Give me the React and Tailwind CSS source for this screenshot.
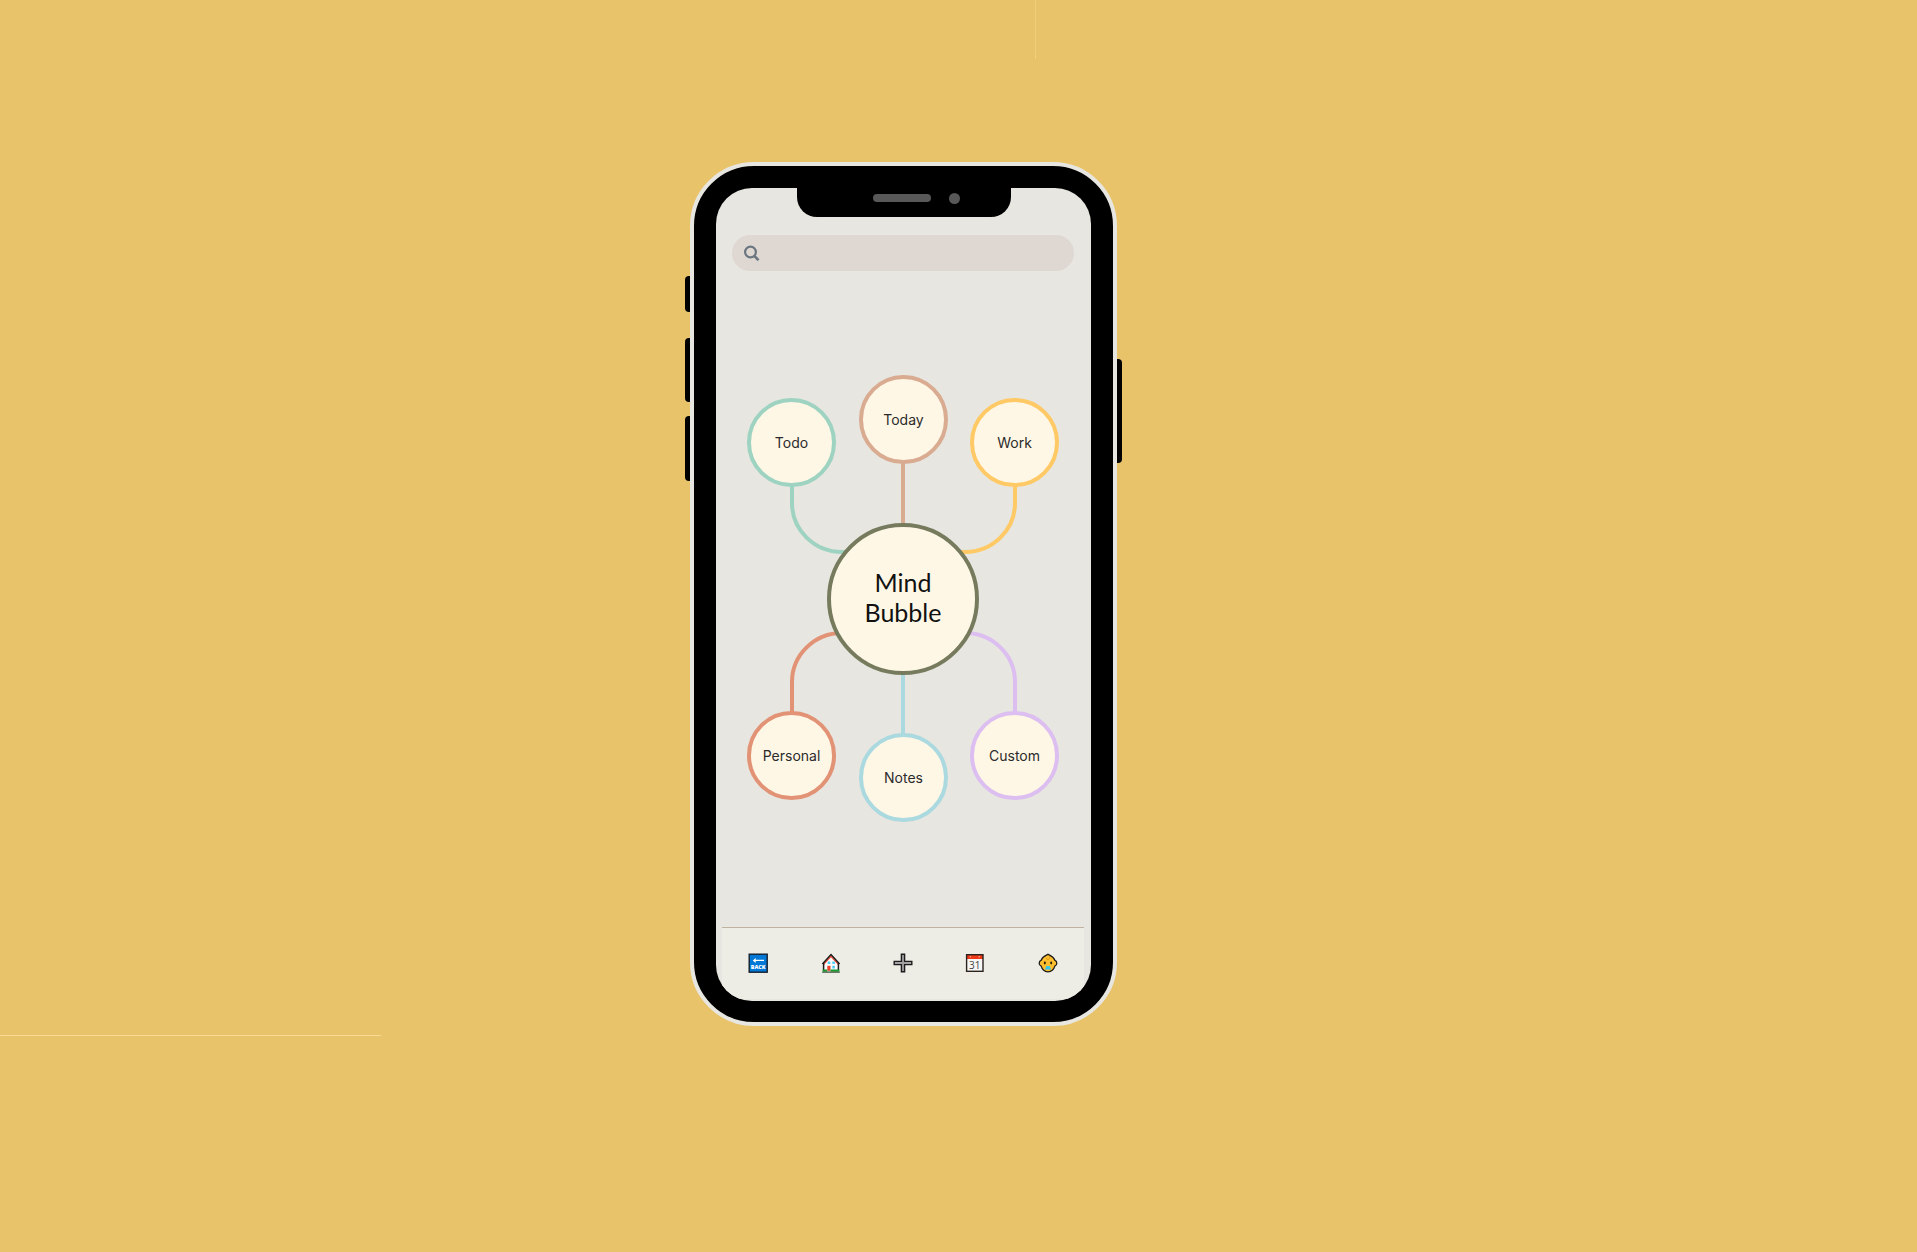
import React from "react";

const bubbles = [
  { label: "Todo", place: "left-[31px] top-[127px] border-[#9fd3c1]" },
  { label: "Today", place: "left-[143px] top-[104px] border-[#d9ab91]" },
  { label: "Work", place: "left-[254px] top-[127px] border-[#ffc966]" },
  { label: "Personal", place: "left-[31px] top-[440px] border-[#e29375]" },
  { label: "Notes", place: "left-[143px] top-[462px] border-[#abd9e0]" },
  { label: "Custom", place: "left-[254px] top-[440px] border-[#dcbff0]" },
];

function BackIcon() {
  return (
    <svg viewBox="0 0 20 20" className="size-5" aria-hidden="true">
      <rect x="1.2" y="1.2" width="18" height="18" fill="#0078d7" stroke="#14202e" strokeWidth="1.4" />
      <path d="M5.6 7.400h10.400M7.800 5.600 5.600 7.400l2.200 1.800" fill="none" stroke="#fff" strokeWidth="1.100" />
      <text x="10.200" y="16.400" textAnchor="middle" fontFamily="Open Sans, sans-serif" fontWeight="800" fontSize="5.400" fill="#fff">BACK</text>
    </svg>
  );
}

function HouseIcon() {
  return (
    <svg viewBox="0 0 20 20" className="size-5" aria-hidden="true">
      <path d="M3 9.500v8.500h14.200V9.500L10 2.500z" fill="#fbfbfb" />
      <path d="M2.600 11.200 10 3.400l7.400 7.800" fill="none" stroke="#e8402a" strokeWidth="1.300" />
      <path d="M1.400 11 10 1.600l8.600 9.400M2.600 10.400V17M17.400 10.400V17" fill="none" stroke="#1c1c1c" strokeWidth="1.500" />
      <path d="M6.700 8.400h2.600V11H6.700zM11.300 8.400h2.600V11h-2.600zM11.300 12.800h2.600v2.600h-2.600z" fill="#52cdf2" />
      <path d="M6.300 12.800h3.200v5H6.300z" fill="#e8402a" />
      <path d="M1.600 16.600h4.700v1.900H1.600zM9.500 16.600h8.900v1.900H9.500z" fill="#159a2e" />
      <path d="M1.200 19.100h17.600" stroke="#1c3a1c" strokeWidth="1.100" />
    </svg>
  );
}

function PlusIcon() {
  return (
    <svg viewBox="0 0 20 20" className="size-5" aria-hidden="true">
      <path d="M8.400 1.200h3.200v7.200h7.200v3.200h-7.200v7.200H8.400v-7.200H1.200V8.400h7.200z" fill="#a2a2a2" stroke="#1c1c1c" strokeWidth="1.400" />
    </svg>
  );
}

function CalendarIcon() {
  return (
    <svg viewBox="0 0 20 20" className="size-5" aria-hidden="true">
      <rect x="1.600" y="1.700" width="16.400" height="16.600" fill="#f6f6f6" />
      <path d="M1.600 1.700H18V6H1.600z" fill="#f03a17" />
      <circle cx="5.400" cy="3.700" r="0.700" fill="#fbb3a4" />
      <circle cx="14.200" cy="3.700" r="0.700" fill="#fbb3a4" />
      <rect x="1.600" y="1.700" width="16.400" height="16.600" fill="none" stroke="#2b2320" strokeWidth="1.400" />
      <text x="9.800" y="15.600" textAnchor="middle" fontFamily="Open Sans, sans-serif" fontSize="10" fill="#444">31</text>
    </svg>
  );
}

function BabyIcon() {
  return (
    <svg viewBox="0 0 20 20" className="size-5" aria-hidden="true">
      <path d="M10 1.200c1.600 1.200 5.600 2 6.800 6 1.200.5 2 1.700 2 3s-.8 2.500-2 3C15.800 16.800 13.200 18.800 10 18.800S4.200 16.800 3.200 13.200c-1.200-.5-2-1.700-2-3s.8-2.500 2-3c1.200-4 5.200-4.800 6.800-6z" fill="#fdbf2d" stroke="#1c1c1c" strokeWidth="1.300" />
      <path d="M10.300 2.400c2 1.500 1.900 3.600 0 4-1.500.3-2.200-.8-1.300-1.600" fill="none" stroke="#d08e18" strokeWidth="0.900" />
      <ellipse cx="6.800" cy="10" rx="1" ry="1.400" fill="#2a1d0a" />
      <ellipse cx="13.200" cy="10" rx="1" ry="1.400" fill="#2a1d0a" />
      <path d="M8.400 13h3.200l1.600 3.400H6.800z" fill="#35c4ee" />
    </svg>
  );
}

const tabs = [
  { label: "Back", Icon: BackIcon },
  { label: "Home", Icon: HouseIcon },
  { label: "Add", Icon: PlusIcon },
  { label: "Calendar", Icon: CalendarIcon },
  { label: "Profile", Icon: BabyIcon },
];

function MindMap() {
  return (
    <section className="relative h-[656px] w-[376px]" aria-label="Mind map">
      <svg viewBox="0 0 376 656" className="absolute inset-0 size-full" fill="none" strokeWidth="4" aria-hidden="true">
        <path d="M76 210V232A50 49 0 0 0 126 281H136" stroke="#9fd3c1" />
        <path d="M187 188V256" stroke="#d9ab91" />
        <path d="M299 210V232A50 49 0 0 1 249 281H239" stroke="#ffc966" />
        <path d="M76 446V411A50 49 0 0 1 126 362H136" stroke="#e29375" />
        <path d="M187 398V466" stroke="#abd9e0" />
        <path d="M299 446V411A50 49 0 0 0 249 362H239" stroke="#dcbff0" />
      </svg>
      {bubbles.map(({ label, place }) => (
        <button
          key={label}
          type="button"
          className={`absolute flex size-[89px] items-center justify-center rounded-full border-4 bg-[#fff7e6] font-[Inter,sans-serif] text-[14px] leading-5 text-[#2b2b2b] ${place}`}
        >
          {label}
        </button>
      ))}
      <h1 className="absolute left-[111px] top-[252px] flex size-[152px] items-center justify-center rounded-full border-4 border-[#777b5e] bg-[#fff7e6] pb-1 text-center font-[Lato,sans-serif] text-[25px] leading-[30px] font-normal text-[#111]">
        Mind
        <br />
        Bubble
      </h1>
    </section>
  );
}

function Phone() {
  return (
    <div className="relative rounded-[64px] border-4 border-[#e8e6e0] bg-black px-[22px] pt-[22px] pb-[21px]">
      <span className="absolute -left-[9px] top-[110px] h-9 w-[5px] rounded-l bg-black" />
      <span className="absolute -left-[9px] top-[172px] h-16 w-[5px] rounded-l bg-black" />
      <span className="absolute -left-[9px] top-[250px] h-[65px] w-[5px] rounded-l bg-black" />
      <span className="absolute -right-[9px] top-[193px] h-[104px] w-[5px] rounded-r bg-black" />

      <div className="flex w-[375px] flex-col overflow-hidden rounded-[36px] bg-[#e7e6e0]">
        <div className="flex h-[29px] w-[214px] justify-end gap-[18px] self-center rounded-b-[20px] bg-black pt-[6px] pr-[51px]">
          <span className="h-2 w-[58px] rounded-[4px] bg-[#585858]" />
          <span className="-mt-px size-[11px] rounded-full bg-[#585858]" />
        </div>

        <label className="mt-[18px] mr-[17px] ml-4 flex h-9 items-center gap-2 rounded-full bg-[#dfd7d2] px-3">
          <svg viewBox="0 0 16 16" className="size-4 shrink-0" fill="none" stroke="#6b7680" aria-hidden="true">
            <circle cx="6.500" cy="7" r="5.400" strokeWidth="2.200" />
            <path d="m10.500 11.200 4 4" strokeWidth="2.600" />
          </svg>
          <input type="search" aria-label="Search" className="min-w-0 flex-1 bg-transparent text-[14px] text-[#2b2b2b] outline-none" />
        </label>

        <MindMap />

        <nav className="mr-[7px] mb-[2px] ml-[6px] grid h-[72px] grid-cols-5 border-t border-[#bfb2a0] bg-[#eeede5] pb-[2px]">
          {tabs.map(({ label, Icon }) => (
            <button key={label} type="button" aria-label={label} className="flex items-center justify-center">
              <Icon />
            </button>
          ))}
        </nav>
      </div>
    </div>
  );
}

export default function App() {
  return (
    <main className="relative flex min-h-screen items-start justify-center overflow-hidden bg-[#e8c36a] pt-[162px] pr-[110px] pb-16">
      <span className="absolute top-0 left-[1035px] h-[59px] w-px bg-[#f0cf7f]" />
      <span className="absolute top-[1035px] left-0 h-px w-[381px] bg-[#f7da94]" />
      <Phone />
    </main>
  );
}
